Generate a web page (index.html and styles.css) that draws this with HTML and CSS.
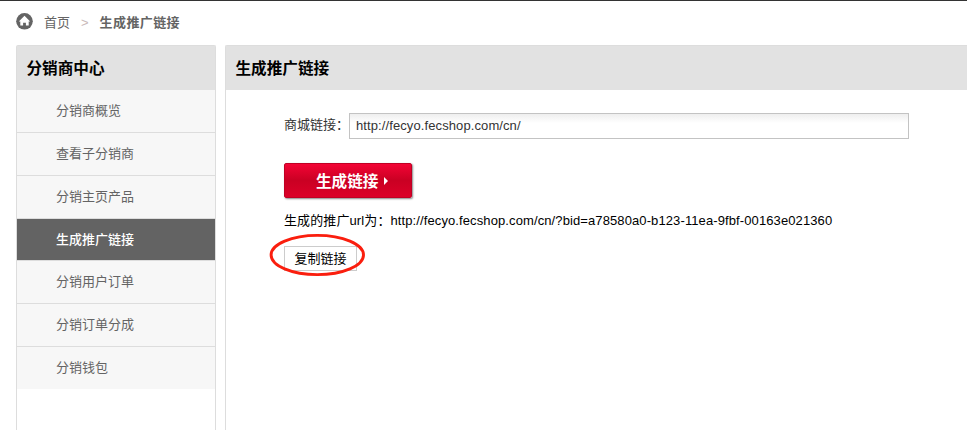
FILE: index.html
```html
<!DOCTYPE html>
<html lang="zh-CN">
<head>
<meta charset="utf-8">
<title>生成推广链接</title>
<link rel="stylesheet" href="styles.css">
</head>
<body>
<nav class="crumbs">
  <svg class="home" viewBox="0 0 17 17" width="17" height="17"><circle cx="8.5" cy="8.3" r="8.3" fill="#646464"/><path d="M8.5 2.8 L14.2 8.5 H12.7 V12.4 H9.9 V9.8 H7.1 V12.4 H4.3 V8.5 H2.8 Z" fill="#fff"/></svg>
  <a class="crumb-home">首页</a>
  <span class="sep">&gt;</span>
  <strong>生成推广链接</strong>
</nav>
<div class="layout">
  <aside class="panel sidebar">
    <h2>分销商中心</h2>
    <ul class="menu">
      <li>分销商概览</li>
      <li>查看子分销商</li>
      <li>分销主页产品</li>
      <li class="active">生成推广链接</li>
      <li>分销用户订单</li>
      <li>分销订单分成</li>
      <li>分销钱包</li>
    </ul>
  </aside>
  <main class="panel content">
    <h2>生成推广链接</h2>
    <div class="form">
      <div class="field">
        <label for="url">商城链接：</label>
        <input id="url" type="text" value="http://fecyo.fecshop.com/cn/">
      </div>
      <button class="generate" type="button">生成链接<i class="arrow"></i></button>
      <p class="result">生成的推广url为：http://fecyo.fecshop.com/cn/?bid=a78580a0-b123-11ea-9fbf-00163e021360</p>
      <div class="copy-wrap">
        <button class="copy" type="button">复制链接</button>
        <svg class="ring" viewBox="0 0 98 44" width="98" height="44"><ellipse cx="48.3" cy="22" rx="46.2" ry="19.6" fill="none" stroke="#fa1e0e" stroke-width="2.9"/></svg>
      </div>
    </div>
  </main>
</div>
</body>
</html>
```
FILE: styles.css
```css
* { box-sizing: border-box; }
html { overflow: hidden; }
body {
  margin: 0;
  height: 430px;
  overflow: hidden;
  display: flex;
  flex-direction: column;
  border-top: 1px solid #333;
  background: #fff;
  color: #000;
  font: 13px/20px "Liberation Sans", "Noto Sans CJK SC", sans-serif;
}
button, input { font: inherit; }
.crumbs {
  display: flex;
  align-items: center;
  height: 44px;
  flex: none;
  padding: 0 16px;
  color: #646464;
  line-height: 20px;
}
.home { display: block; margin-bottom: 3px; }
.crumb-home { margin-left: 11px; }
.sep { margin: 0 11px; color: #c9b9b9; }
.crumbs strong { letter-spacing: .4px; }
.layout {
  display: flex;
  gap: 9px;
  flex: 1;
  padding-left: 16px;
}
.panel {
  border: 1px solid #ddd;
  border-bottom: 0;
  border-radius: 2px 2px 0 0;
}
.panel h2 {
  margin: 0;
  height: 44px;
  padding-left: 9.5px;
  background: #e2e2e2;
  font-size: 15.6px;
  line-height: 46px;
}
.sidebar { width: 200px; flex: none; }
.content { flex: 1; border-right: 0; border-top-right-radius: 0; }
.menu { margin: 0; padding: 0; list-style: none; }
.menu li {
  height: 43px;
  padding-left: 39px;
  border-bottom: 1px solid #ddd;
  background: #f7f7f7;
  color: #646464;
  line-height: 41px;
}
.menu li:last-child { height: 42px; border-bottom: 0; }
.menu .active { height: 42px; background: #636363; color: #fff; font-weight: 500; }
.form { padding: 23px 0 0 58px; }
.field { display: flex; height: 26px; }
.field label { width: 65px; line-height: 24px; color: #333; white-space: nowrap; }
.field input {
  width: 560px;
  height: 26px;
  padding: 0 6px 2px;
  border: 1px solid #c3c3c3;
  border-radius: 0;
  background: linear-gradient(#eee, #fff 9px);
  color: #333;
  letter-spacing: .1px;
  outline: 0;
}
.generate {
  display: flex;
  align-items: center;
  width: 128px;
  height: 35px;
  margin-top: 24px;
  padding: 3px 0 0 31px;
  border: 1px solid #c00024;
  border-radius: 2px;
  background: linear-gradient(#f30435, #ca0023 50%, #dc0028);
  box-shadow: 1px 1px 2px #888;
  color: #fff;
  font-size: 15.6px;
  font-weight: bold;
}
.arrow {
  margin: 0 0 2px 6px;
  border: 4px solid transparent;
  border-left-color: #fff;
  border-right: 0;
}
.result { margin: 13px 0 0; white-space: nowrap; letter-spacing: .105px; }
.copy-wrap { position: relative; width: 73px; margin-top: 15px; }
.copy {
  display: block;
  width: 73px;
  height: 25px;
  padding: 0;
  border: 1px solid #ccc;
  background: #fff;
  color: #000;
}
.ring { position: absolute; left: -15px; top: -13px; }
```
